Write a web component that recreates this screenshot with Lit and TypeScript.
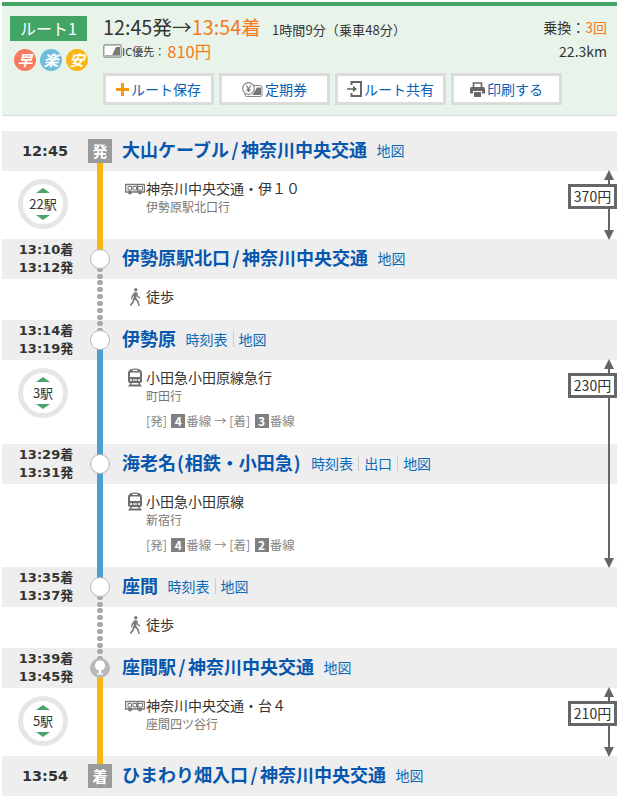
import { LitElement, html, css, svg, nothing } from "lit";
import { customElement } from "lit/decorators.js";

const busIcon = html`<svg viewBox="0 0 20 13" width="20" height="13"><path d="M1 2.500h17.500a1 1 0 0 1 1 1V10h-19V3.500a1 1 0 0 1 .5-1z" fill="#fff" stroke="#777" stroke-width="1.500"/><path d="M3 4.500h3.500V8H3zM8 4.500h3.500V8H8zM13 4.500h4.500V8H13z" fill="#fff" stroke="#777"/><rect x="12" y="3" width="1" height="7" fill="#777"/><circle cx="5" cy="10.500" r="2" fill="#777"/><circle cx="15" cy="10.500" r="2" fill="#777"/></svg>`;
const trainIcon = html`<svg viewBox="0 0 16 19" width="16" height="19"><path d="M3 1.500Q8-.5 13 1.500Q15 2.500 15 5V13Q15 15 13 15H3Q1 15 1 13V5Q1 2.500 3 1.500z" fill="#6e6e6e"/><rect x="5.500" y="1.800" width="5" height="1.200" fill="#fff"/><rect x="3" y="4.500" width="10" height="4.500" rx=".5" fill="#fff"/><circle cx="4" cy="12" r="1.100" fill="#fff"/><circle cx="12" cy="12" r="1.100" fill="#fff"/><rect x="6" y="11.400" width="4" height="1.200" fill="#fff"/><path d="M3.500 15 1 18.500H15L12.500 15H11L11.800 16.500H4.200L5 15z" fill="#6e6e6e"/></svg>`;
const walkIcon = html`<svg viewBox="0 0 12 18" width="12" height="18"><circle cx="6.800" cy="1.800" r="1.700" fill="#777"/><path d="M5.300 4.200H8L9.200 8 11.500 9.500 11 10.500 8.300 9 7.700 7 7.400 10.500 9.800 13.500 10.800 18H9.300L8.300 14 5.800 11.500 4.800 14.500 2 18 .8 17 3.500 13.500 5 7.500 3.900 8.500 3.200 11.500 2 11.200 2.800 7.500z" fill="#777"/></svg>`;
const icIcon = html`<svg viewBox="0 0 19 14" width="19" height="14"><rect x=".8" y=".8" width="17.400" height="12.400" rx="1.500" fill="#fff" stroke="#888" stroke-width="1.200"/><path d="M9 11.500 13 3H17V11.500z" fill="#777"/><rect x="2" y="11" width="15" height="1.200" fill="#aaa"/></svg>`;
const yenIcon = html`<svg viewBox="0 0 21 15" width="21" height="15"><rect x="3" y="3.500" width="17" height="11" rx="1.500" fill="#fff" stroke="#888"/><path d="M11 12 15 5.500H19V13H11z" fill="#777"/><circle cx="6.500" cy="6.500" r="5.800" fill="#fff" stroke="#888" stroke-width="1.200"/><path d="M4.300 3.500 6.500 6.800 8.700 3.500M6.500 6.800V10M4.500 7.200H8.500M4.500 8.700H8.500" fill="none" stroke="#777" stroke-width="1.100"/></svg>`;
const shareIcon = html`<svg viewBox="0 0 15 16" width="15" height="16"><path d="M4.500 4V1H14V15H4.500V12" fill="none" stroke="#666" stroke-width="2"/><path d="M0 7.200H6V4.800L10 8 6 11.200V8.800H0z" fill="#666"/></svg>`;
const printIcon = html`<svg viewBox="0 0 15 15" width="15" height="15"><path d="M3.500 5V1H11.500V5" fill="none" stroke="#666" stroke-width="1.600"/><path d="M1.500 5H13.500Q15 5 15 6.500V11.500H12V9H3V11.500H0V6.500Q0 5 1.500 5z" fill="#666"/><rect x="4" y="10" width="7" height="5" fill="#666"/></svg>`;
const plusIcon = html`<svg viewBox="0 0 13 13" width="13" height="13"><path d="M5 0H8V5H13V8H8V13H5V8H0V5H5z" fill="#f59a0c"/></svg>`;
const transferIcon = svg`<path d="M10 2.500a5 5 0 0 1 1.200 9.850V15.200H13V16.500H7V15.200H8.800V12.350A5 5 0 0 1 10 2.500z" fill="#fff"/>`;

interface Stop {
  times: string[];
  big?: boolean;
  name: string;
  links: string[];
  mark?: string;
  circle?: boolean;
  transfer?: boolean;
  up?: string;
  down?: string;
}
interface Seg {
  kind: string;
  height: string;
  line: string;
  count?: string;
  icon?: unknown;
  title?: string;
  sub?: string;
  from?: string;
  to?: string;
  fare?: string;
  fareLong?: boolean;
}

const rows: (Stop | Seg)[] = [
  { times: ["12:45"], big: true, name: "大山ケーブル/神奈川中央交通", links: ["地図"], mark: "発", down: "bus" },
  { kind: "ride", height: "h68", line: "bus", count: "22駅", icon: busIcon, title: "神奈川中央交通・伊１０", sub: "伊勢原駅北口行", fare: "370円" },
  { times: ["13:10着", "13:12発"], name: "伊勢原駅北口/神奈川中央交通", links: ["地図"], circle: true, up: "bus", down: "walk" },
  { kind: "walk", height: "h41", line: "walk", icon: walkIcon, title: "徒歩" },
  { times: ["13:14着", "13:19発"], name: "伊勢原", links: ["時刻表", "地図"], circle: true, up: "walk", down: "rail" },
  { kind: "ride", height: "h84", line: "rail", count: "3駅", icon: trainIcon, title: "小田急小田原線急行", sub: "町田行", from: "4", to: "3", fare: "230円", fareLong: true },
  { times: ["13:29着", "13:31発"], name: "海老名(相鉄・小田急)", links: ["時刻表", "出口", "地図"], circle: true, up: "rail", down: "rail" },
  { kind: "ride", height: "h83", line: "rail", icon: trainIcon, title: "小田急小田原線", sub: "新宿行", from: "4", to: "2" },
  { times: ["13:35着", "13:37発"], name: "座間", links: ["時刻表", "地図"], circle: true, up: "rail", down: "walk" },
  { kind: "walk", height: "h41", line: "walk", icon: walkIcon, title: "徒歩" },
  { times: ["13:39着", "13:45発"], name: "座間駅/神奈川中央交通", links: ["地図"], transfer: true, up: "walk", down: "bus" },
  { kind: "ride", height: "h68", line: "bus", count: "5駅", icon: busIcon, title: "神奈川中央交通・台４", sub: "座間四ツ谷行", fare: "210円" },
  { times: ["13:54"], big: true, name: "ひまわり畑入口/神奈川中央交通", links: ["地図"], mark: "着", up: "bus" },
];

const nameParts = (n: string) =>
  n.split(/([\/()])/).map((p) =>
    p === "/" ? html`<span class="slash">/</span>` : p === "(" || p === ")" ? html`<span class="paren">${p}</span>` : p
  );

@customElement("app-root")
export class AppRoot extends LitElement {
  static styles = css`
    :host { display: block; width: 619px; height: 797px; background: #fff; color: #333; overflow: hidden;
      font-family: "Noto Sans CJK JP", "Noto Sans", sans-serif; font-size: 14px; }
    * { box-sizing: border-box; }
    .wrap { padding: 2px 2px 0; }
    .head { height: 114px; background: #e8f4ea; border-top: 4px solid #43a565; border-bottom: 1px solid #dcdcdc;
      display: grid; grid-template-columns: 101px minmax(0, 1fr); }
    .left { padding: 10px 0 0 8px; }
    .badge { width: 77px; height: 25px; background: #43a565; color: #fff; font-size: 16px; line-height: 25px; text-align: center; }
    .medals { display: flex; gap: 4px; margin: 8px 0 0 4px; }
    .medal { width: 22px; height: 22px; border-radius: 50%; color: #fff; font-size: 15px; line-height: 22px; font-weight: 700; text-align: center; font-style: italic; }
    .m1 { background: #f87b5f; } .m2 { background: #6fbcdc; } .m3 { background: #f8b612; }
    .mid { padding-top: 8px; }
    .toprow { display: flex; justify-content: space-between; padding-right: 10px; }
    .timeline { display: flex; align-items: baseline; height: 26px; line-height: 26px; font-size: 19.750px; white-space: nowrap; }
    .timeline .dur { font-size: 13px; margin-left: 11px; letter-spacing: .1px; color: #333; }
    .or { color: #f47a1c; }
    .ic { display: flex; align-items: center; height: 22px; font-size: 11px; white-space: nowrap; }
    .ic .price { font-size: 16.500px; margin-left: 2px; }
    .btns { display: flex; gap: 5px; margin-top: 11px; }
    .btn { flex: 0 0 111px; height: 32px; border: 3px solid #dcdcdc; background: #fff; color: #0a62b4; font-size: 14px;
      display: flex; align-items: center; justify-content: center; gap: 2px; white-space: nowrap; }
    .right { text-align: right; font-size: 14px; white-space: nowrap; }
    .right div { height: 24px; line-height: 26px; }

    .route { margin-top: 15px; }
    .row { position: relative; display: flex; }
    .stop { height: 40px; background: #eee; align-items: center; }
    .time { width: 88px; text-align: center; font-family: "DejaVu Sans", "Noto Sans CJK JP", sans-serif; font-weight: 700; font-size: 13px; line-height: 18px; }
    .time.big { font-size: 14.500px; width: 86px; }
    .time .l { display: block; white-space: nowrap; }
    .nameblock { position: absolute; left: 120px; top: 0; height: 38px; display: flex; align-items: center; white-space: nowrap; }
    .name { color: #0657ad; font-size: 18px; font-weight: 700; line-height: 24px; margin-bottom: 2px; }
    .slash { padding: 0 2.500px; }
    .paren { padding: 0 1px; }
    .links { display: flex; margin-left: 9.500px; font-size: 14px; color: #0a6ab8; line-height: 16px; }
    .links span + span { border-left: 1px solid #ccc; margin-left: 5px; padding-left: 5px; }

    .spine { position: absolute; left: 95px; width: 6px; }
    .bus { background: #f8b612; }
    .rail { background: #4b9fd1; }
    .walk { background: radial-gradient(circle at 3px 3.500px, #aaa 2.600px, transparent 3px) 0 0 / 6px 7px repeat-y; }
    .spine.full { top: 0; bottom: 0; }
    .spine.u { top: 0; height: 20px; }
    .spine.d { top: 20px; bottom: 0; }
    .circle { position: absolute; left: 88px; top: 10px; width: 20px; height: 20px; border-radius: 50%; background: #fff; border: 1.500px solid #b5b5b5; }
    .xfer { position: absolute; left: 88px; top: 10px; width: 20px; height: 20px; border-radius: 50%; background: #b9b9b9; }
    .xfer svg { display: block; }
    .mark { position: absolute; left: 86px; top: 8px; width: 24px; height: 24px; background: #9a9a9a; color: #fff; font-size: 15px; font-weight: 700; line-height: 24px; text-align: center; }

    .h68 { height: 68px; } .h41 { height: 41px; } .h84 { height: 84px; } .h83 { height: 83px; }
    .count { position: absolute; left: 16px; top: 8px; width: 50px; height: 50px; border-radius: 50%; border: 5px solid #e6e6e6;
      display: flex; flex-direction: column; align-items: center; justify-content: center; font-size: 13px; line-height: 18px; }
    .tri-u, .tri-d { width: 0; height: 0; border-left: 7px solid transparent; border-right: 7px solid transparent; }
    .tri-u { border-bottom: 5px solid #4aa56c; margin-bottom: 2px; }
    .tri-d { border-top: 5px solid #4aa56c; margin-top: 2px; }
    .info { margin-left: 121px; padding-top: 8px; display: grid; grid-template-columns: 23px 1fr; align-content: start; white-space: nowrap; }
    .info .ic-cell { display: flex; justify-content: center; align-items: center; height: 19px; }
    .info .t { font-size: 14px; line-height: 19px; }
    .info .s { grid-column: 2; font-size: 12px; line-height: 18px; color: #777; }
    .info .p { grid-column: 2; font-size: 12.500px; line-height: 18px; color: #888; margin-top: 7px; display: flex; align-items: center; white-space: pre; }
    .num { display: inline-block; width: 14px; height: 14px; background: #808080; color: #fff; font-weight: 700; font-size: 12px; line-height: 14px; text-align: center; margin: 0 1px 0 1.500px; }

    .fare { position: absolute; right: 0; top: -1px; bottom: -1px; width: 49px; z-index: 2; display: flex; flex-direction: column; align-items: center; }
    .fare.long { bottom: -124px; }
    .head-u, .head-d { width: 0; height: 0; border-left: 5px solid transparent; border-right: 5px solid transparent; margin-left: 32px; }
    .head-u { border-bottom: 10px solid #666; }
    .head-d { border-top: 10px solid #666; }
    .shaft { flex: 1; width: 2px; background: #666; margin-left: 32px; }
    .box { position: absolute; left: 0; top: 14px; width: 49px; height: 25px; border: 3px solid #666; background: #fff; font-size: 14px; line-height: 18px; text-align: center; }
  `;

  renderStop(s: Stop) {
    return html`<div class="row stop">
      ${s.up ? html`<div class="spine u ${s.up}"></div>` : nothing}
      ${s.down ? html`<div class="spine d ${s.down}"></div>` : nothing}
      <div class="time ${s.big ? "big" : ""}">${s.times.map((t) => html`<span class="l">${t}</span>`)}</div>
      ${s.mark ? html`<div class="mark">${s.mark}</div>` : nothing}
      ${s.circle ? html`<div class="circle"></div>` : nothing}
      ${s.transfer ? html`<div class="xfer"><svg viewBox="0 0 20 20" width="20" height="20">${transferIcon}</svg></div>` : nothing}
      <div class="nameblock">
        <span class="name">${nameParts(s.name)}</span>
        <span class="links">${s.links.map((l) => html`<span>${l}</span>`)}</span>
      </div>
    </div>`;
  }

  renderSeg(s: Seg) {
    return html`<div class="row ${s.height}">
      <div class="spine full ${s.line}"></div>
      ${s.count ? html`<div class="count"><div class="tri-u"></div>${s.count}<div class="tri-d"></div></div>` : nothing}
      <div class="info">
        <div class="ic-cell">${s.icon}</div>
        <div class="t">${s.title}</div>
        ${s.sub ? html`<div class="s">${s.sub}</div>` : nothing}
        ${s.from ? html`<div class="p">[発] <span class="num">${s.from}</span>番線 → [着] <span class="num">${s.to}</span>番線</div>` : nothing}
      </div>
      ${s.fare
        ? html`<div class="fare ${s.fareLong ? "long" : ""}">
            <div class="head-u"></div><div class="shaft"></div><div class="head-d"></div>
            <div class="box">${s.fare}</div>
          </div>`
        : nothing}
    </div>`;
  }

  render() {
    return html`<div class="wrap">
      <div class="head">
        <div class="left">
          <div class="badge">ルート1</div>
          <div class="medals">
            <div class="medal m1">早</div><div class="medal m2">楽</div><div class="medal m3">安</div>
          </div>
        </div>
        <div class="mid">
          <div class="toprow">
            <div>
              <div class="timeline">12:45発→<span class="or">13:54着</span><span class="dur">1時間9分（乗車48分）</span></div>
              <div class="ic">${icIcon}IC優先：<span class="or price">810円</span></div>
            </div>
            <div class="right">
              <div>乗換：<span class="or">3回</span></div>
              <div>22.3km</div>
            </div>
          </div>
          <div class="btns">
            <div class="btn">${plusIcon}ルート保存</div>
            <div class="btn">${yenIcon}定期券</div>
            <div class="btn">${shareIcon}ルート共有</div>
            <div class="btn">${printIcon}印刷する</div>
          </div>
        </div>
      </div>
      <div class="route">
        ${rows.map((r) => ("times" in r ? this.renderStop(r as Stop) : this.renderSeg(r as Seg)))}
      </div>
    </div>`;
  }
}
